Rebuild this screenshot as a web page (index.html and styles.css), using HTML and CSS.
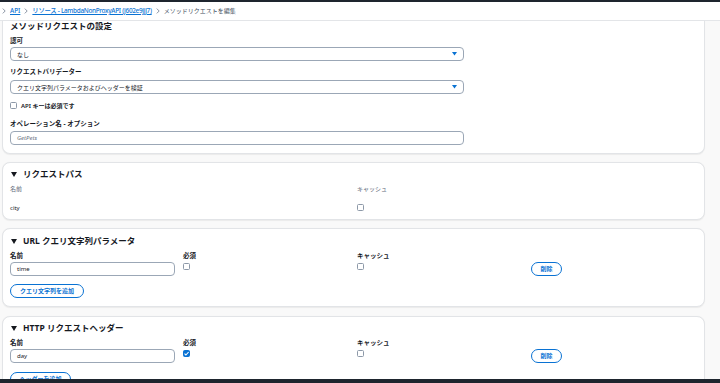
FILE: index.html
```html
<!DOCTYPE html>
<html lang="ja">
<head>
<meta charset="utf-8">
<link rel="stylesheet" href="styles.css">
</head>
<body>
<div class="topbar"></div>
<nav class="crumbs">
  <svg class="sep" viewBox="0 0 4 6" width="4" height="6"><path d="M0.8 0.6 L3.2 3 L0.8 5.4" fill="none" stroke="#7d8998" stroke-width="0.9"/></svg>
  <a class="crumb-link">API</a>
  <svg class="sep" viewBox="0 0 4 6" width="4" height="6"><path d="M0.8 0.6 L3.2 3 L0.8 5.4" fill="none" stroke="#7d8998" stroke-width="0.9"/></svg>
  <a class="crumb-link crumb-long">リソース - LambdaNonProxyAPI (j602e9jjj7)</a>
  <svg class="sep" viewBox="0 0 4 6" width="4" height="6"><path d="M0.8 0.6 L3.2 3 L0.8 5.4" fill="none" stroke="#7d8998" stroke-width="0.9"/></svg>
  <span class="crumb-current">メソッドリクエストを編集</span>
</nav>
<main class="content">
  <section class="card card-first">
    <h2 class="title">メソッドリクエストの設定</h2>
    <div class="label lab-auth">認可</div>
    <div class="select sel-auth"><span>なし</span><svg class="caret" viewBox="0 0 5 4" width="5" height="4"><path d="M0 0 H5 L2.5 3.5 Z" fill="#0972d3"/></svg></div>
    <div class="label lab-valid">リクエストバリデーター</div>
    <div class="select sel-valid"><span>クエリ文字列パラメータおよびヘッダーを検証</span><svg class="caret" viewBox="0 0 5 4" width="5" height="4"><path d="M0 0 H5 L2.5 3.5 Z" fill="#0972d3"/></svg></div>
    <div class="check-row"><span class="cbox"></span><span class="check-text">API キーは必須です</span></div>
    <div class="label lab-op">オペレーション名 - オプション</div>
    <div class="input input-wide placeholder">GetPets</div>
  </section>

  <section class="card card-path">
    <h2 class="title"><svg class="tri" viewBox="0 0 6 5" width="6" height="5"><path d="M0 0 H6 L3 5 Z" fill="#16191f"/></svg>リクエストパス</h2>
    <div class="grid-path head-row">
      <span class="sub">名前</span>
      <span class="sub">キャッシュ</span>
    </div>
    <div class="grid-path value-row">
      <span class="value">city</span>
      <span class="cell-check"><span class="cbox"></span></span>
    </div>
  </section>

  <section class="card card-param">
    <h2 class="title"><svg class="tri" viewBox="0 0 6 5" width="6" height="5"><path d="M0 0 H6 L3 5 Z" fill="#16191f"/></svg>URL クエリ文字列パラメータ</h2>
    <div class="grid-param head-row2">
      <span class="label">名前</span>
      <span class="label">必須</span>
      <span class="label">キャッシュ</span>
      <span></span>
    </div>
    <div class="grid-param field-row">
      <div class="input input-name">time</div>
      <span class="cell-check"><span class="cbox"></span></span>
      <span class="cell-check"><span class="cbox"></span></span>
      <span><button class="btn btn-del">削除</button></span>
    </div>
    <button class="btn btn-add">クエリ文字列を追加</button>
  </section>

  <section class="card card-param card-last">
    <h2 class="title"><svg class="tri" viewBox="0 0 6 5" width="6" height="5"><path d="M0 0 H6 L3 5 Z" fill="#16191f"/></svg>HTTP リクエストヘッダー</h2>
    <div class="grid-param head-row2">
      <span class="label">名前</span>
      <span class="label">必須</span>
      <span class="label">キャッシュ</span>
      <span></span>
    </div>
    <div class="grid-param field-row">
      <div class="input input-name">day</div>
      <span class="cell-check"><span class="cbox checked"><svg viewBox="0 0 7 7" width="7" height="7"><path d="M1.5 3.6 L2.9 5 L5.6 2" fill="none" stroke="#fff" stroke-width="1.1"/></svg></span></span>
      <span class="cell-check"><span class="cbox"></span></span>
      <span><button class="btn btn-del">削除</button></span>
    </div>
    <button class="btn btn-add btn-add2">ヘッダーを追加</button>
  </section>
</main>
<div class="bottombar"></div>
</body>
</html>
```

FILE: styles.css
```css
* { box-sizing: border-box; }
html, body {
  margin: 0;
  padding: 0;
  width: 720px;
  height: 383px;
  overflow: hidden;
}
body {
  background: #f9f9f9;
  font-family: "Noto Sans", "Noto Sans CJK JP", sans-serif;
  color: #16191f;
  font-size: 6px;
}
.topbar {
  height: 2px;
  background: #1e252e;
}
.crumbs {
  height: 19px;
  background: #ffffff;
  border-bottom: 1px solid #e4e6e9;
  display: flex;
  align-items: center;
  padding-left: 0;
  gap: 2px;
  font-size: 6.4px;
  line-height: 8px;
}
.sep { flex: none; margin: 0 2px; }
.crumb-link {
  color: #0972d3;
  text-decoration: underline;
  font-weight: 500;
}
.crumb-long { letter-spacing: -0.3px; }
.crumb-current { color: #414d5c; font-size: 6px; }
.content {
  padding: 0 15px 0 2px;
}
.card {
  background: #ffffff;
  border: 1px solid #e2e4e7;
  border-radius: 8px;
  padding: 6px 8px 7px 7px;
  margin-top: 8px;
  box-shadow: 0 0.5px 1px rgba(0,7,22,0.06);
}
.card-first {
  margin-top: 0;
  border-top: none;
  border-radius: 0 0 8px 8px;
  padding-top: 0;
  padding-bottom: 8px;
}
.title {
  margin: 0;
  font-size: 8.5px;
  line-height: 10px;
  font-weight: 700;
  color: #16191f;
  display: flex;
  align-items: center;
}
.tri { flex: none; margin: 0 6px 0 1px; }
.label {
  font-size: 6.5px;
  line-height: 8px;
  font-weight: 700;
  color: #16191f;
}
.lab-auth { margin-top: 6px; }
.lab-valid { margin-top: 7px; }
.lab-op { margin-top: 10px; }
.select {
  height: 14px;
  width: 454px;
  border: 1px solid #9ba7b6;
  border-radius: 4px;
  display: flex;
  align-items: center;
  justify-content: space-between;
  padding: 0 6px 0 6px;
  font-size: 6px;
  color: #16191f;
}
.sel-auth { margin-top: 2px; }
.sel-valid { margin-top: 4px; }
.caret { flex: none; }
.check-row {
  margin-top: 7px;
  height: 9px;
  display: flex;
  align-items: center;
  gap: 4px;
}
.check-text { font-size: 6px; font-weight: 600; }
.cbox {
  display: inline-flex;
  width: 7px;
  height: 7px;
  border: 1px solid #8d99a8;
  border-radius: 1.5px;
  background: #fff;
  flex: none;
}
.cbox.checked {
  background: #0972d3;
  border-color: #0972d3;
  align-items: center;
  justify-content: center;
}
.cbox.checked svg { flex: none; margin: -1px; }
.input {
  height: 14px;
  border: 1px solid #9ba7b6;
  border-radius: 4px;
  display: flex;
  align-items: center;
  padding: 0 6px;
  font-size: 6px;
  color: #16191f;
}
.input-wide { width: 454px; margin-top: 3px; }
.placeholder { color: #5f6b7a; font-style: italic; }
.grid-path {
  display: grid;
  grid-template-columns: 347px 1fr;
}
.head-row { margin-top: 6px; line-height: 8px; }
.sub { color: #5f6b7a; font-size: 6px; }
.value-row { margin-top: 10px; height: 9px; align-items: center; }
.value { font-size: 6px; }
.cell-check { display: flex; align-items: flex-start; padding-top: 1px; }
.value-row .cell-check { padding-top: 0; align-items: center; }
.card-param { padding-top: 7px; padding-bottom: 8px; }
.card-last { margin-top: 9px; padding-top: 6px; }
.grid-param {
  display: grid;
  grid-template-columns: 173px 174px 174px 1fr;
}
.head-row2 { margin-top: 6px; }
.field-row { margin-top: 2px; }
.input-name { width: 165px; }
.btn {
  font-family: "Noto Sans", "Noto Sans CJK JP", sans-serif;
  background: #fff;
  border: 1.5px solid #0972d3;
  color: #0972d3;
  border-radius: 8px;
  font-size: 6px;
  font-weight: 700;
  height: 14px;
  padding: 0;
  display: inline-flex;
  align-items: center;
  justify-content: center;
  line-height: 1;
}
.btn-del { width: 31px; }
.btn-add { width: 74px; margin-top: 8px; display: flex; }
.btn-add2 { width: 61px; margin-top: 9px; }
.bottombar {
  position: fixed;
  left: 0;
  right: 0;
  bottom: 0;
  height: 4px;
  background: #1e252e;
}
```
